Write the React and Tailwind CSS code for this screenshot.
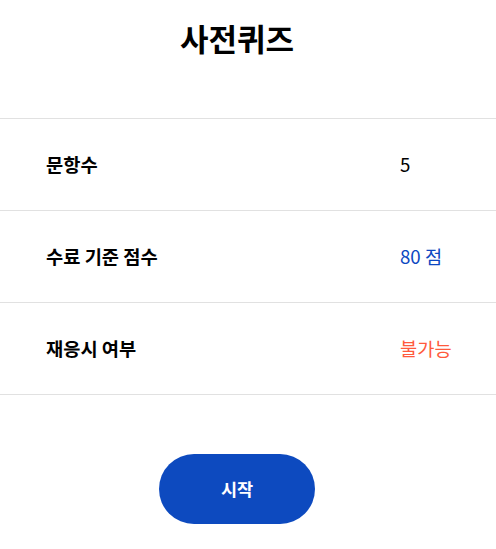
export default function App() {
  const rows = [
    { label: "문항수", value: "5", color: "text-black" },
    { label: "수료 기준 점수", value: "80 점", color: "text-[#0d47c1]" },
    { label: "재응시 여부", value: "불가능", color: "text-[#ff5a3c]" },
  ];
  return (
    <div
      className="w-[496px] h-[549px] bg-white flex flex-col"
      style={{ fontFamily: '"Noto Sans CJK KR", "Noto Sans", sans-serif' }}
    >
      <h1 className="text-center text-[31px] leading-[40px] font-bold text-black pt-[18px] pr-[22px] h-[118px]">
        사전퀴즈
      </h1>
      <div className="border-t border-[#e1e1e1]">
        {rows.map((r) => (
          <div
            key={r.label}
            className="flex items-center h-[92px] border-b border-[#e1e1e1]"
          >
            <div className="flex-1 pl-[46px] text-[18.7px] leading-[24px] font-bold text-black -mt-[2px]">
              {r.label}
            </div>
            <div className={`w-[96px] text-[18.7px] leading-[24px] -mt-[2px] ${r.color}`}>
              {r.value}
            </div>
          </div>
        ))}
      </div>
      <div className="flex justify-center pt-[59px] pr-[22px]">
        <button className="w-[156px] h-[70px] rounded-full bg-[#0d4abf] text-white text-[17.5px] leading-[24px] font-bold">
          시작
        </button>
      </div>
    </div>
  );
}
